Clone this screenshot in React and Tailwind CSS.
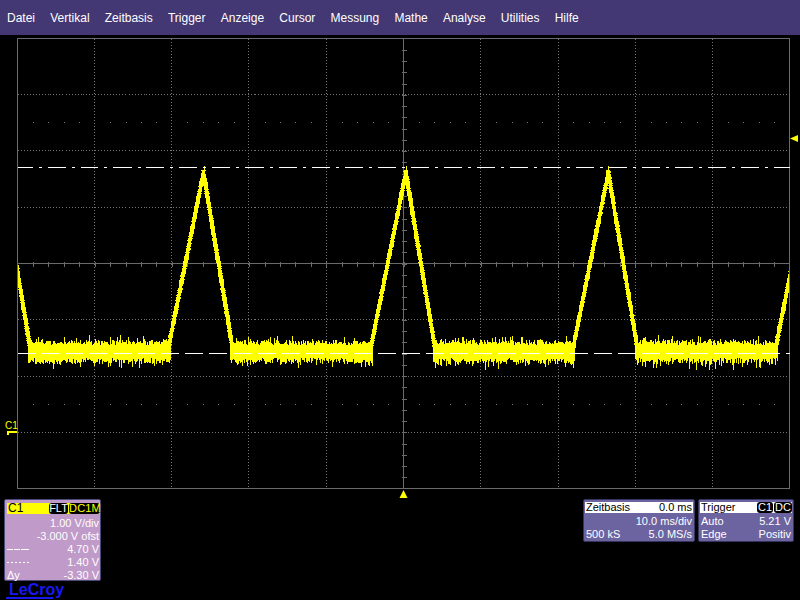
import React from "react";

const MENU = ["Datei", "Vertikal", "Zeitbasis", "Trigger", "Anzeige", "Cursor", "Messung", "Mathe", "Analyse", "Utilities", "Hilfe"];

const L = 17.5, R = 789.5, T = 38.5, B = 488.5;
const CX = 403.5, CY = 263.5;
const VLINES = [94, 171, 248, 326, 480, 558, 635, 712];
const HLINES = [94, 150, 207, 319, 376, 432];
const PEAKS = [1.1, 203.5, 405.9, 608.3, 810.7];
const RISE = 35;
const FALL = 29;

function rng(seed) {
  let s = seed;
  return () => {
    s = (s * 1664525 + 1013904223) >>> 0;
    return s / 4294967296;
  };
}

function wavePath() {
  const r = rng(12345);
  let d = "";
  // flat noisy floor, one column per pixel
  for (let x = 18.5; x < 789; x += 1) {
    let onSlope = false;
    for (const p of PEAKS) if (x > p - RISE + 2 && x < p + FALL - 2) onSlope = true;
    if (onSlope) continue;
    const spikeUp = r() < 0.2 ? r() * 6 : 0;
    const spikeDown = r() < 0.25 ? r() * 7 : 0;
    const top = Math.round(345 - r() * 5 - spikeUp);
    const bot = Math.round(358 + r() * 6 + spikeDown);
    d += `M${x} ${top}V${bot}`;
  }
  // steep edges, one row per pixel, so that the trace keeps its width
  for (const p of PEAKS) {
    for (let y = 170; y < 350; y += 1) {
      const k = Math.max(0, y - 172) / 175;
      const w = 1.7 + r() * 0.9;
      for (const cx of [p - k * RISE, p + k * FALL]) {
        const x1 = Math.max(18, Math.round(cx - w));
        const x2 = Math.min(789, Math.round(cx + w));
        if (x2 > x1) d += `M${x1} ${y + 0.5}H${x2}`;
      }
    }
    if (p > 100 && p < 700) d += `M${Math.round(p) + 0.5} 166V172`;
  }
  return d;
}

function Scope() {
  const hTicks = [];
  for (let i = 1; i < 50; i++) hTicks.push(L + (i * (R - L)) / 50);
  const vTicks = [];
  for (let i = 1; i < 40; i++) vTicks.push(T + (i * (B - T)) / 40);
  const dots = [];
  for (const y of [122.5, 404.5]) {
    for (let i = 1; i < 50; i++) if (i % 5 !== 0) dots.push([Math.round(L + (i * (R - L)) / 50) + 0.5, y]);
  }
  return (
    <svg width="800" height="464" viewBox="0 35 800 464" className="block" shapeRendering="crispEdges">
      <g stroke="#767676" strokeWidth="1" fill="none" strokeDasharray="1 2">
        {VLINES.map((x) => (
          <path key={x} d={`M${x + 0.5} ${T}V${B}`} />
        ))}
        {HLINES.map((y) => (
          <path key={y} d={`M${L} ${y + 0.5}H${R}`} />
        ))}
      </g>
      <g fill="#767676">
        {dots.map(([x, y]) => (
          <rect key={`${x}-${y}`} x={x - 0.5} y={y - 0.5} width="1" height="1" />
        ))}
      </g>
      <path d={`M${L} ${T}H${R}V${B}H${L}Z M${CX} ${T}V${B} M${L} ${CY}H${R}`} stroke="#6b6b6b" fill="none" />
      <g stroke="#6b6b6b" fill="none">
        {hTicks.map((x) => (
          <path key={x} d={`M${Math.round(x) + 0.5} ${CY - 2}v5`} />
        ))}
        {vTicks.map((y) => (
          <path key={y} d={`M${CX - 2} ${Math.round(y) + 0.5}h5`} />
        ))}
      </g>
      <path d={wavePath()} stroke="#ffff00" strokeWidth="1" fill="none" />
      <path d={`M${L} 167.5H${R}`} stroke="#ffffff" strokeDasharray="18 6 3 6" strokeDashoffset="3" fill="none" />
      <path d={`M${L} 353.5H${R}`} stroke="#ffffff" strokeDasharray="18 6" fill="none" />
      <path d="M790 138.5L798 135V142Z" fill="#ffff00" shapeRendering="auto" />
      <path d="M403.5 490L407.5 498H399.5Z" fill="#ffff00" shapeRendering="auto" />
      <path d="M7 431h10v2H9v2H7Z" fill="#ffff00" />
      <text x="5" y="429" fill="#ffff00" fontSize="10" fontFamily="'Liberation Sans', sans-serif" shapeRendering="auto">C1</text>
    </svg>
  );
}

function Row({ left, right }) {
  return (
    <div className="flex justify-between h-[13px] leading-[13px] whitespace-nowrap">
      <span>{left}</span>
      <span>{right}</span>
    </div>
  );
}

function Badge({ children, className }) {
  return (
    <span className={`bg-black rounded-[3px] h-[11px] leading-[11px] text-[11px] text-center ${className}`}>{children}</span>
  );
}

function DashGlyph({ dash }) {
  return (
    <svg width="22" height="13" className="block">
      <path d="M0 6.5H22" stroke="#fff" strokeDasharray={dash} />
    </svg>
  );
}

export default function App() {
  return (
    <div className="w-[800px] h-[600px] bg-black overflow-hidden flex flex-col text-white font-['Liberation_Sans',Arial,sans-serif] text-[11px]">
      <div className="h-[35px] bg-[#433873] flex items-center pl-[7px] gap-[15.2px] text-[12px] shrink-0">
        {MENU.map((m) => (
          <span key={m}>{m}</span>
        ))}
      </div>
      <Scope />
      <div className="flex justify-between items-start pl-[4px] pr-[6px] shrink-0">
        <div className="flex flex-col">
          <div className="w-[97px] h-[82px] bg-[#c09ac8] rounded-[2px] border border-[#4a4a7a] pt-[3px] pl-[2px]">
            <div className="bg-[#ffff00] h-[11px] flex items-center justify-between text-black pl-[1px] mb-[3px] leading-[11px] text-[12px]">
              <span>C1</span>
              <span className="flex gap-[1px] text-[#ffff00]">
                <Badge className="w-[19px] text-white">FLT</Badge>
                <Badge className="w-[31px] tracking-[0.2px]">DC1M</Badge>
              </span>
            </div>
            <div className="pr-[1px] text-right">
              <Row left="" right="1.00 V/div" />
              <Row left="" right="-3.000 V ofst" />
              <Row left={<DashGlyph dash="6 1 6 1 8" />} right="4.70 V" />
              <Row left={<DashGlyph dash="2 2" />} right="1.40 V" />
              <Row left="Δy" right="-3.30 V" />
            </div>
          </div>
          <div className="mt-[1px] ml-[2px] w-[47px] h-[17px] border-b-2 border-[#1818f0] pl-[3px] text-[#1818f0] font-bold text-[16px] leading-[15px] whitespace-nowrap">
            LeCroy
          </div>
        </div>
        <div className="flex gap-[3px]">
          <div className="w-[112px] h-[43px] bg-[#6c64a0] rounded-[2px] border border-[#34345c] pt-[2px] px-[1px]">
            <div className="bg-white text-black h-[11px] leading-[11px] flex justify-between px-[1px] mb-[2px]">
              <span>Zeitbasis</span>
              <span>0.0 ms</span>
            </div>
            <div className="px-[1px]">
              <Row left="" right="10.0 ms/div" />
              <Row left="500 kS" right="5.0 MS/s" />
            </div>
          </div>
          <div className="w-[96px] h-[43px] bg-[#6c64a0] rounded-[2px] border border-[#34345c] pt-[2px] px-[1px]">
            <div className="bg-white text-black h-[11px] leading-[11px] flex justify-between pl-[1px] mb-[2px]">
              <span>Trigger</span>
              <span className="flex gap-[1px] text-white">
                <Badge className="w-[16px]">C1</Badge>
                <Badge className="w-[18px]">DC</Badge>
              </span>
            </div>
            <div className="px-[1px]">
              <Row left="Auto" right="5.21 V" />
              <Row left="Edge" right="Positiv" />
            </div>
          </div>
        </div>
      </div>
    </div>
  );
}
